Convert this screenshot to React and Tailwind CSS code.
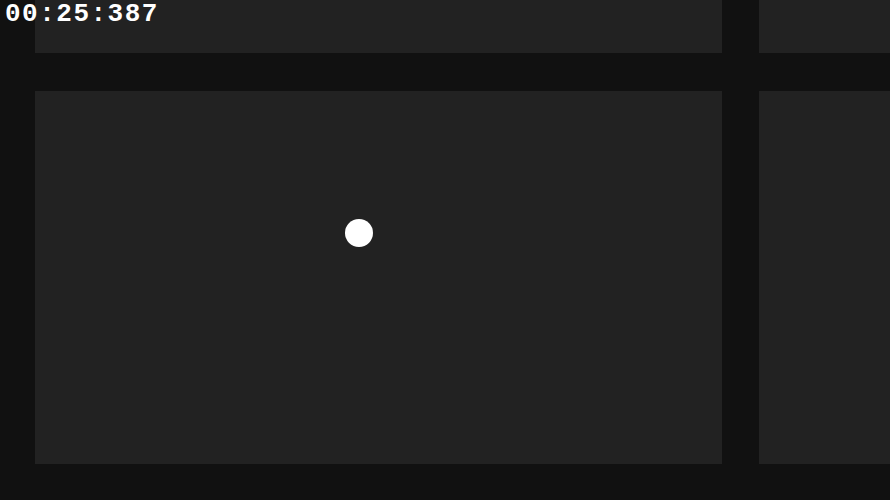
import React from 'react';

export default function App() {
  return (
    <div className="relative h-[500px] w-[890px] overflow-hidden bg-[#111111]">
      <div className="grid grid-cols-[687px_1fr] grid-rows-[53px_373px] gap-x-[37px] gap-y-[38px] pl-[35px]">
        <div className="bg-[#222222]" />
        <div className="bg-[#222222]" />
        <div className="relative bg-[#222222]">
          <div className="absolute left-[310px] top-[128px] h-[28px] w-[28px] rounded-full bg-white" />
        </div>
        <div className="bg-[#222222]" />
      </div>
      <div
        className="absolute left-[5px] top-[-1px] text-[26px] font-bold leading-[30px] tracking-[1.5px] text-white"
        style={{ fontFamily: '"Liberation Mono", "DejaVu Sans Mono", monospace' }}
      >
        00:25:387
      </div>
    </div>
  );
}
